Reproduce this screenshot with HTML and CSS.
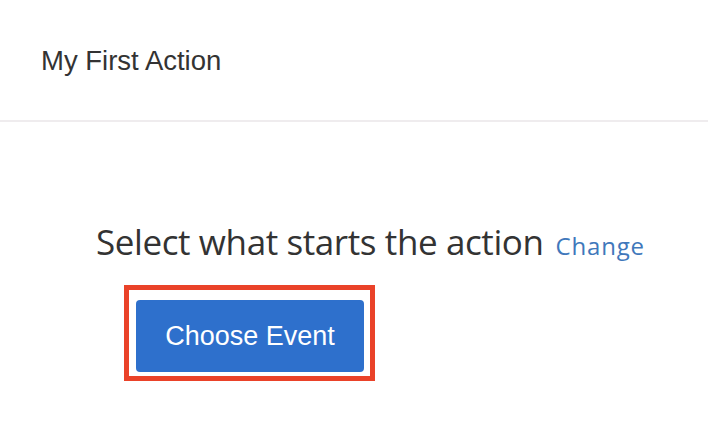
FILE: index.html
```html
<!DOCTYPE html>
<html>
<head>
<meta charset="utf-8">
<link rel="stylesheet" href="styles.css">
</head>
<body>
<header class="top-bar">
  <h1 class="action-title">My First Action</h1>
</header>
<main class="content">
  <div class="prompt">
    <span class="prompt-text">Select what starts the action</span>
    <a class="change-link" href="#">Change</a>
  </div>
  <div class="highlight">
    <button class="choose-btn" type="button">Choose Event</button>
  </div>
</main>
</body>
</html>
```

FILE: styles.css
```css
html, body {
  margin: 0;
  padding: 0;
  background: #ffffff;
}

body {
  width: 708px;
  height: 428px;
  overflow: hidden;
  font-family: "Liberation Sans", Arial, sans-serif;
}

.top-bar {
  height: 120px;
  border-bottom: 2px solid #efecee;
  display: flex;
  align-items: center;
  padding-left: 41px;
  box-sizing: content-box;
}

.action-title {
  margin: 0;
  font-size: 27.5px;
  font-weight: normal;
  color: #333333;
  line-height: 30px;
  padding-top: 2px;
}

.content {
  padding-left: 96px;
  padding-top: 100px;
}

.prompt {
  display: flex;
  align-items: baseline;
  gap: 12px;
  line-height: 40px;
}

.prompt-text {
  font-family: "Open Sans", sans-serif;
  font-size: 35px;
  letter-spacing: -0.4px;
  color: #333333;
}

.change-link {
  font-family: "Open Sans", sans-serif;
  font-size: 24px;
  letter-spacing: 0.8px;
  color: #3f78bb;
  text-decoration: none;
}

.highlight {
  display: inline-block;
  margin-top: 19px;
  margin-left: 28px;
  border: 5px solid #ea4229;
  padding: 10px 6px 4px 7px;
  line-height: 0;
}

.choose-btn {
  width: 228px;
  height: 72px;
  border: none;
  border-radius: 4px;
  background: #2e70cc;
  color: #ffffff;
  font-family: "Liberation Sans", Arial, sans-serif;
  font-size: 27px;
  padding: 0;
  cursor: pointer;
}
```
